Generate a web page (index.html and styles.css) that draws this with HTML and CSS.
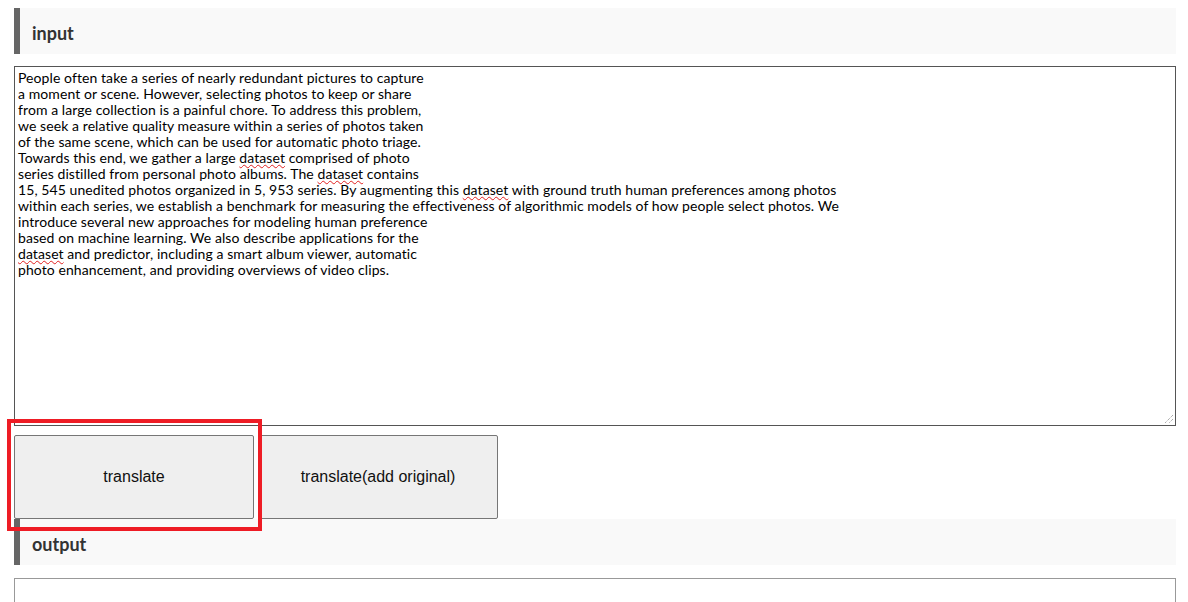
FILE: index.html
```html
<!DOCTYPE html>
<html lang="en">
<head>
<meta charset="utf-8">
<title>translate</title>
<link rel="stylesheet" href="styles.css">
</head>
<body>
<main class="page">
  <h2 class="section-title">input</h2>
  <div class="textbox" role="textbox" aria-multiline="true">People often take a series of nearly redundant pictures to capture
a moment or scene. However, selecting photos to keep or share
from a large collection is a painful chore. To address this problem,
we seek a relative quality measure within a series of photos taken
of the same scene, which can be used for automatic photo triage.
Towards this end, we gather a large <span class="misspelled">dataset</span> comprised of photo
series distilled from personal photo albums. The <span class="misspelled">dataset</span> contains
15, 545 unedited photos organized in 5, 953 series. By augmenting this <span class="misspelled">dataset</span> with ground truth human preferences among photos
within each series, we establish a benchmark for measuring the effectiveness of algorithmic models of how people select photos. We
introduce several new approaches for modeling human preference
based on machine learning. We also describe applications for the
<span class="misspelled">dataset</span> and predictor, including a smart album viewer, automatic
photo enhancement, and providing overviews of video clips.<svg class="grip" width="10" height="10" viewBox="0 0 10 10"><path d="M9 1L1 9M9 5L5 9" stroke="#888" stroke-width="1" stroke-dasharray="1 1"/></svg></div>
  <div class="actions">
    <button class="btn btn-highlight" type="button">translate</button>
    <button class="btn" type="button">translate(add original)</button>
  </div>
  <h2 class="section-title">output</h2>
  <div class="textbox output" role="textbox" aria-multiline="true"></div>
</main>
</body>
</html>
```
FILE: styles.css
```css
html, body {
  margin: 0;
  padding: 0;
  background: #fff;
}
.page {
  padding: 8px 12px 0 14px;
  font-family: "Lato", "DejaVu Sans", sans-serif;
  color: #222;
}
.section-title {
  margin: 0;
  height: 46px;
  box-sizing: border-box;
  display: flex;
  align-items: center;
  padding: 3px 0 0 12px;
  border-left: 6px solid #666;
  background: #f9f9f9;
  font-size: 18px;
  font-weight: bold;
  color: #333;
}
.textbox {
  position: relative;
  margin-top: 12px;
  height: 352px;
  border: 1px solid #555;
  padding: 3px 3px;
  white-space: pre;
  font-size: 14px;
  letter-spacing: 0.08px;
  line-height: 16px;
  color: #000;
  overflow: hidden;
}
.misspelled {
  text-decoration: underline wavy #e02020;
  text-decoration-thickness: 1px;
  text-underline-offset: 1px;
}
.grip {
  position: absolute;
  right: 1px;
  bottom: 1px;
}
.actions {
  position: relative;
  display: flex;
  gap: 4px;
  margin-top: 9px;
}
.btn {
  width: 240px;
  height: 84px;
  background: #efefef;
  border: 1px solid #767676;
  border-radius: 2px;
  font-family: "Liberation Sans", Arial, sans-serif;
  font-size: 16px;
  color: #111;
  padding: 0;
}
.btn-highlight {
  position: relative;
}
.btn-highlight::after {
  content: "";
  position: absolute;
  left: -8px;
  top: -17px;
  width: 247px;
  height: 104px;
  border: 4px solid #ee1c25;
  pointer-events: none;
}
.output {
  margin-top: 13px;
  height: 100px;
  border-color: #999;
}
```
